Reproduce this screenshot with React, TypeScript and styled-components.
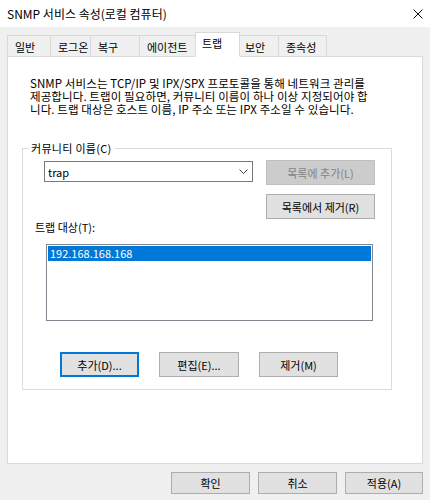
import React from 'react'
import styled, { createGlobalStyle } from 'styled-components'

const GlobalStyle = createGlobalStyle`
  html, body {
    margin: 0;
    padding: 0;
    background: #f0f0f0;
  }
  body {
    font-family: 'Malgun Gothic', 'Noto Sans CJK KR', 'Noto Sans', sans-serif;
    font-size: 11px;
    color: #000;
  }
`

const Window = styled.div`
  width: 430px;
  height: 500px;
  background: #f0f0f0;
  display: flex;
  flex-direction: column;
  overflow: hidden;
`

const TitleBar = styled.div`
  height: 27px;
  flex-shrink: 0;
  background: #fff;
  display: flex;
  align-items: center;
  justify-content: space-between;
  padding: 0 7px;
`

const Title = styled.div`
  font-size: 12px;
  line-height: 16px;
`

const CloseIcon = styled.svg`
  width: 10px;
  height: 10px;
  display: block;
`

const Content = styled.div`
  padding: 5px 7px 0;
  display: flex;
  flex-direction: column;
`

const TabStrip = styled.div`
  display: flex;
  align-items: flex-end;
  height: 25px;
  margin-bottom: -1px;
`

const Tab = styled.div<{ $w: number; $active?: boolean }>`
  box-sizing: border-box;
  width: ${p => (p.$active ? p.$w + 4 : p.$w)}px;
  height: ${p => (p.$active ? 25 : 22)}px;
  margin: 0 ${p => (p.$active ? -2 : 0)}px;
  padding: ${p => (p.$active ? '2px 0 0 6px' : '3px 0 0 7px')};
  line-height: 16px;
  white-space: nowrap;
  background: ${p => (p.$active ? '#fff' : '#f0f0f0')};
  border: 1px solid #d9d9d9;
  border-bottom-color: ${p => (p.$active ? '#fff' : '#d9d9d9')};
  border-left-width: ${p => (p.$active ? 1 : 0)}px;
  position: relative;
  z-index: ${p => (p.$active ? 2 : 1)};

  &:first-child {
    border-left-width: 1px;
  }
`

const Panel = styled.div`
  box-sizing: border-box;
  height: 408px;
  background: #fff;
  border: 1px solid #d9d9d9;
  padding: 20px 0 0 0;
  display: flex;
  flex-direction: column;
  align-items: flex-start;
`

const Description = styled.p`
  margin: 0 0 0 22px;
  font-size: 11.5px;
  line-height: 13px;
  letter-spacing: 0.1px;
  white-space: nowrap;
`

const GroupBox = styled.fieldset`
  box-sizing: border-box;
  width: 370px;
  margin: 24px 0 0 14px;
  padding: 0 0 12px 0;
  border: 1px solid #dcdcdc;
  min-width: 0;
`

const Legend = styled.legend`
  margin-left: 6px;
  padding: 0 2px;
  line-height: 16px;
  letter-spacing: 0.3px;
`

const TopRow = styled.div`
  display: flex;
  align-items: flex-start;
  margin-top: 4px;
`

const Combo = styled.div`
  box-sizing: border-box;
  width: 209px;
  height: 21px;
  margin: 1px 0 0 21px;
  border: 1px solid #7a7a7a;
  background: #fff;
  display: flex;
  align-items: center;
  justify-content: space-between;
  padding: 0 4px 0 3px;
`

const ComboText = styled.span`
  line-height: 16px;
`

const Chevron = styled.svg`
  width: 9px;
  height: 5px;
  display: block;
`

const ButtonColumn = styled.div`
  display: flex;
  flex-direction: column;
  gap: 9px;
  margin-left: 13px;
`

const Button = styled.button<{ $w: number; $h?: number; $focus?: boolean }>`
  box-sizing: border-box;
  width: ${p => p.$w}px;
  height: ${p => p.$h ?? 25}px;
  padding: 0;
  font-family: inherit;
  font-size: 11px;
  line-height: 16px;
  color: #000;
  background: #e1e1e1;
  border: 1px solid ${p => (p.$focus ? '#0078d7' : '#adadad')};
  box-shadow: ${p => (p.$focus ? 'inset 0 0 0 1px #0078d7' : 'none')};
  border-radius: 0;
  white-space: nowrap;

  &:disabled {
    background: #cccccc;
    border-color: #bfbfbf;
    color: #838383;
  }
`

const FieldLabel = styled.div`
  margin-left: 12px;
  line-height: 16px;
`

const ListBox = styled.div`
  box-sizing: border-box;
  width: 327px;
  height: 77px;
  margin: 9px 0 0 23px;
  border: 1px solid #828790;
  background: #fff;
  padding: 1px;
`

const ListItem = styled.div<{ $selected?: boolean }>`
  height: 15px;
  line-height: 15px;
  padding-left: 2px;
  background: ${p => (p.$selected ? '#0078d7' : 'transparent')};
  color: ${p => (p.$selected ? '#fff' : '#000')};
`

const ButtonRow = styled.div`
  display: flex;
  gap: 20px;
  margin: 31px 0 0 37px;
`

const Footer = styled.div`
  display: flex;
  justify-content: flex-end;
  gap: 8px;
  margin-top: 8px;
`

const tabs = [
  { label: '일반', w: 44 },
  { label: '로그온', w: 40 },
  { label: '복구', w: 49 },
  { label: '에이전트', w: 57 },
  { label: '트랩', w: 41, active: true },
  { label: '보안', w: 41 },
  { label: '종속성', w: 48 }
]

export default function App () {
  return (
    <>
      <GlobalStyle />
      <Window>
        <TitleBar>
          <Title>SNMP 서비스 속성(로컬 컴퓨터)</Title>
          <CloseIcon viewBox='0 0 10 10'>
            <path d='M0.5 0.5 L9.5 9.5 M9.5 0.5 L0.5 9.5' stroke='#111' strokeWidth='1' fill='none' />
          </CloseIcon>
        </TitleBar>
        <Content>
          <TabStrip>
            {tabs.map(t => (
              <Tab key={t.label} $w={t.w} $active={t.active}>{t.label}</Tab>
            ))}
          </TabStrip>
          <Panel>
            <Description>
              SNMP 서비스는 TCP/IP 및 IPX/SPX 프로토콜을 통해 네트워크 관리를<br />
              제공합니다. 트랩이 필요하면, 커뮤니티 이름이 하나 이상 지정되어야 합<br />
              니다. 트랩 대상은 호스트 이름, IP 주소 또는 IPX 주소일 수 있습니다.
            </Description>
            <GroupBox>
              <Legend>커뮤니티 이름(C)</Legend>
              <TopRow>
                <Combo>
                  <ComboText>trap</ComboText>
                  <Chevron viewBox='0 0 9 5'>
                    <polyline points='0.5,0.5 4.5,4.5 8.5,0.5' stroke='#444' strokeWidth='1' fill='none' />
                  </Chevron>
                </Combo>
                <ButtonColumn>
                  <Button $w={109} disabled>목록에 추가(L)</Button>
                  <Button $w={109}>목록에서 제거(R)</Button>
                </ButtonColumn>
              </TopRow>
              <FieldLabel>트랩 대상(T):</FieldLabel>
              <ListBox>
                <ListItem $selected>192.168.168.168</ListItem>
              </ListBox>
              <ButtonRow>
                <Button $w={79} $focus>추가(D)...</Button>
                <Button $w={80}>편집(E)...</Button>
                <Button $w={79}>제거(M)</Button>
              </ButtonRow>
            </GroupBox>
          </Panel>
          <Footer>
            <Button $w={79} $h={22}>확인</Button>
            <Button $w={79} $h={22}>취소</Button>
            <Button $w={78} $h={22}>적용(A)</Button>
          </Footer>
        </Content>
      </Window>
    </>
  )
}
